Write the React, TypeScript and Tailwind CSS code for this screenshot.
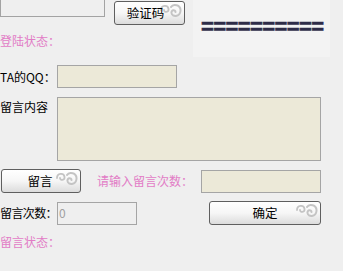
import React from "react";

const font = { fontFamily: '"Noto Sans CJK SC", "Liberation Sans", sans-serif' };

function Swirl() {
  return (
    <svg
      className="absolute right-[1px] top-[1px]"
      width="24"
      height="17"
      viewBox="0 0 24 17"
      fill="none"
      aria-hidden
    >
      <path
        d="M2 7 C2 2 9 1.5 9.5 6 C10 9.5 5 10 5 7"
        stroke="#c4c4c4"
        strokeWidth="1.8"
        strokeLinecap="round"
      />
      <path
        d="M12 4 C14 0.5 22 1.5 21.5 8 C21 14 13 14.5 12.5 10 C12 6.5 16.5 6.5 16.5 9"
        stroke="#c4c4c4"
        strokeWidth="2"
        strokeLinecap="round"
      />
    </svg>
  );
}

function Btn({ children, className }: { children: React.ReactNode; className: string }) {
  return (
    <button
      className={
        "relative flex items-center justify-center rounded-[3px] border border-[#5f5f5f] bg-gradient-to-b from-[#ffffff] via-[#f6f6f6] to-[#dcdcdc] text-[12.5px] text-black shrink-0 " +
        className
      }
      style={font}
    >
      <Swirl />
      <span className="relative">{children}</span>
    </button>
  );
}

export default function App() {
  return (
    <div
      className="w-[343px] h-[271px] overflow-hidden bg-[#efefef] text-[12px] leading-[14px] text-black"
      style={font}
    >
      {/* top: captcha input + button, status, captcha box */}
      <div className="flex">
        <div className="w-[193px] shrink-0">
          <div className="flex items-start">
            <div className="w-[105px] h-[17px] border border-t-0 border-[#a3a3a3] bg-[#efefef] shrink-0" />
            <Btn className="ml-[9px] mt-[1px] w-[71px] h-[24px] pr-[8px]">验证码</Btn>
          </div>
          <div className="mt-[9px] text-[#e27cc6]">登陆状态：</div>
        </div>
        <div className="w-[137px] h-[57px] bg-[#f3f3f3] flex items-start pl-[8px] pt-[14px]">
          <span
            className="text-[#2e2c48] font-bold text-[22px] leading-[25px] tracking-[-0.6px] whitespace-nowrap [-webkit-text-stroke:0.5px_#2e2c48]"
            style={{ fontFamily: '"Liberation Sans", sans-serif' }}
          >
            ==========
          </span>
        </div>
      </div>

      {/* TA的QQ */}
      <div className="flex items-center mt-[8px]">
        <div className="w-[57px] shrink-0 whitespace-nowrap">TA的QQ：</div>
        <div className="w-[120px] h-[23px] border border-[#a5a5a5] bg-[#ece9d8]" />
      </div>

      {/* 留言内容 */}
      <div className="flex mt-[9px]">
        <div className="w-[57px] shrink-0 pt-[3px] whitespace-nowrap">留言内容</div>
        <div className="w-[264px] h-[64px] border border-[#a5a5a5] bg-[#ece9d8]" />
      </div>

      {/* 留言 + 次数 */}
      <div className="flex items-center mt-[8px]">
        <Btn className="ml-[1px] w-[80px] h-[24px] pr-[2px]">留言</Btn>
        <div className="ml-[16px] w-[104px] shrink-0 whitespace-nowrap text-[#e27cc6]">请输入留言次数：</div>
        <div className="w-[120px] h-[23px] border border-[#a5a5a5] bg-[#ece9d8]" />
      </div>

      {/* 留言次数 + 确定 */}
      <div className="flex items-center mt-[8px]">
        <div className="w-[57px] shrink-0 whitespace-nowrap tracking-[-0.6px]">留言次数：</div>
        <div className="w-[80px] h-[23px] border border-[#a5a5a5] bg-[#efefef] flex items-center pl-[1px] text-[#a0a0a0] shrink-0">
          0
        </div>
        <Btn className="ml-[72px] w-[112px] h-[24px]">确定</Btn>
      </div>

      <div className="mt-[10px] text-[#e27cc6]">留言状态：</div>
    </div>
  );
}
